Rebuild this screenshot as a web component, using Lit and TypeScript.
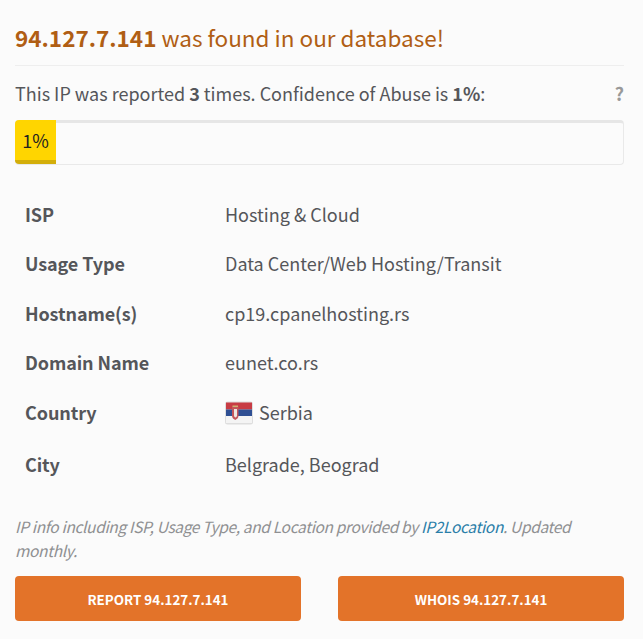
import { LitElement, html, css } from "lit";
import { customElement } from "lit/decorators.js";

const rows: [string, string][] = [
  ["ISP", "Hosting & Cloud"],
  ["Usage Type", "Data Center/Web Hosting/Transit"],
  ["Hostname(s)", "cp19.cpanelhosting.rs"],
  ["Domain Name", "eunet.co.rs"],
  ["Country", "Serbia"],
  ["City", "Belgrade, Beograd"],
];

@customElement("app-root")
export class AppRoot extends LitElement {
  static styles = css`
    :host {
      display: block;
      width: 643px;
      height: 639px;
      box-sizing: border-box;
      overflow: hidden;
      background: #fbfbfb;
      padding: 20px 19px 0 15px;
      font-family: "Noto Sans CJK SC", "Noto Sans", sans-serif;
      color: #55565a;
      font-size: 18px;
    }
    h3 {
      margin: 0;
      font-size: 22.5px;
      line-height: 34px;
      font-weight: 400;
      color: #b05e14;
      padding-bottom: 11px;
      border-bottom: 1px solid #eeeeee;
    }
    h3 b { font-weight: 700; }
    .line {
      display: flex;
      justify-content: space-between;
      margin-top: 14px;
      line-height: 27px;
    }
    .line b { font-weight: 700; }
    .q { font-weight: 700; color: #999; }
    .bar {
      margin-top: 13px;
      height: 45px;
      box-sizing: border-box;
      background: #fbfbfb;
      border: 1px solid #e9e9e9;
      border-top: 3px solid #e6e6e6;
      border-radius: 4px;
      display: flex;
    }
    .fill {
      width: 41px;
      margin: -3px 0 -1px -1px;
      box-sizing: border-box;
      height: 44px;
      background: #ffd500;
      border-bottom: 4px solid #d3ae0a;
      border-radius: 4px 0 0 4px;
      color: #222;
      text-align: center;
      line-height: 40px;
    }
    .table {
      display: grid;
      grid-template-columns: 200px 1fr;
      margin-top: 24.600px;
      padding-left: 10px;
      line-height: 27px;
    }
    .k { font-weight: 700; padding: 11.250px 0; letter-spacing: -0.1px; }
    .v { padding: 11.250px 0; display: flex; align-items: center; gap: 6px; }
    .tall { padding: 11.500px 0 13.500px; }
    .flag { width: 28px; height: 24px; display: block; flex: none; }
    .note {
      margin: 25.400px 0 0;
      font-style: italic;
      font-size: 15.500px;
      letter-spacing: -0.35px;
      line-height: 24px;
      color: #8f9092;
    }
    .note a { color: #2a7ea8; text-decoration: none; }
    .btns {
      display: grid;
      grid-template-columns: 286px 286px;
      justify-content: space-between;
      margin-top: 13.600px;
    }
    .btn {
      height: 45px;
      background: #e37329;
      border-radius: 4px;
      color: #fff;
      font-weight: 700;
      font-size: 13.400px;
      display: flex;
      align-items: center;
      justify-content: center;
    }
  `;

  render() {
    return html`
      <h3><b>94.127.7.141</b> was found in our database!</h3>
      <div class="line">
        <span>This IP was reported <b>3</b> times. Confidence of Abuse is <b>1%</b>:</span>
        <span class="q">?</span>
      </div>
      <div class="bar"><div class="fill">1%</div></div>
      <div class="table">
        ${rows.map(
          ([k, v]) => html`
            <div class="k ${k === "Country" ? "tall" : ""}">${k}</div>
            <div class="v ${k === "Country" ? "tall" : ""}">
              ${k === "Country"
                ? html`<svg class="flag" viewBox="0 0 28 24">
                    <rect x="0" y="0.500" width="28" height="23" rx="2.500" fill="#dedede" />
                    <rect x="1" y="1.500" width="26" height="7" fill="#c83c44" />
                    <rect x="1" y="8.500" width="26" height="6.500" fill="#2f4f93" />
                    <rect x="1" y="15" width="26" height="7" fill="#f4f4f4" />
                    <path d="M7 5.500h6.500v9c0 2.500-1.800 3.800-3.250 4.500C8.800 18.300 7 17 7 14.500z" fill="#c4565a" />
                    <path d="M9 8h3v6.500c0 1-.7 1.700-1.500 2-.8-.3-1.500-1-1.500-2z" fill="#efe6e0" />
                    <path d="M7.500 4.500h5.500v1.500H7.500z" fill="#d0b070" />
                  </svg>`
                : null}
              <span>${v}</span>
            </div>
          `
        )}
      </div>
      <p class="note">
        <span>IP info including ISP, Usage Type, and Location provided by</span>
        <a>IP2Location</a><span>. Updated</span>
        <span>monthly.</span>
      </p>
      <div class="btns">
        <div class="btn">REPORT 94.127.7.141</div>
        <div class="btn">WHOIS 94.127.7.141</div>
      </div>
    `;
  }
}
